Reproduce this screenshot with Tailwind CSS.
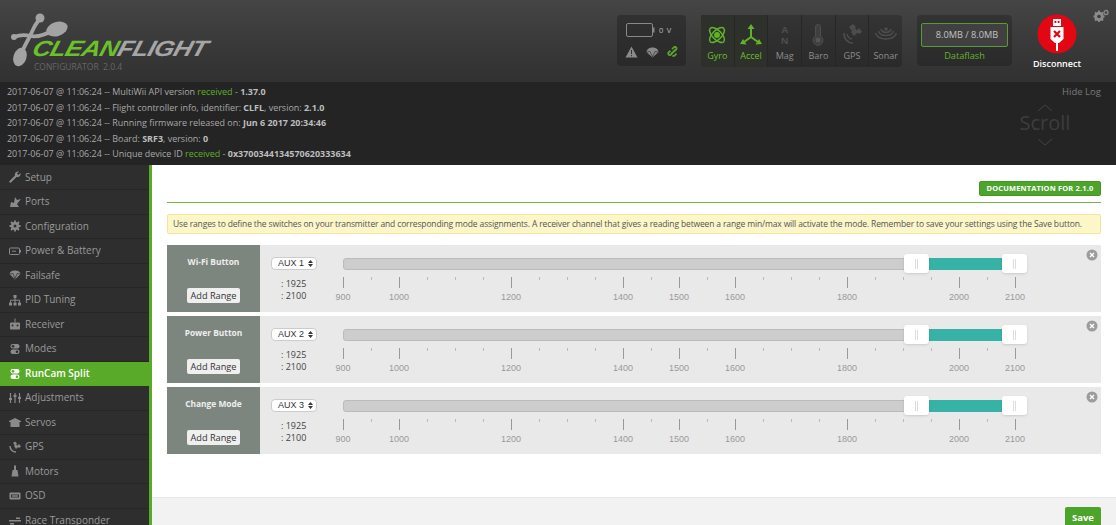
<!doctype html>
<html>
<head>
<meta charset="utf-8">
<script src="https://cdn.jsdelivr.net/npm/@tailwindcss/browser@4"></script>
</head>
<body class="w-[1116px] h-[525px] overflow-hidden bg-white font-['Open_Sans',sans-serif]">
<div class="flex flex-col h-[525px] overflow-hidden">

  <!-- header -->
  <header class="h-[82px] shrink-0 flex bg-linear-to-b from-[#454545] via-[#3a3a3a] to-[#313131] relative">
    <div class="w-[240px] relative shrink-0">
      <svg class="absolute left-[10px] top-[12px]" width="60" height="58" viewBox="0 0 60 58" fill="#a3a3a3">
        <ellipse cx="47" cy="17" rx="11" ry="7" transform="rotate(-18 47 17)"/>
        <ellipse cx="10" cy="45" rx="6.500" ry="9.500" transform="rotate(18 10 45)"/>
        <circle cx="30" cy="6" r="4.500"/>
        <circle cx="4" cy="25" r="3"/>
        <path d="M30 6 Q24 14 20 24 Q15 33 10 44 M4 25 Q12 22 20 24 Q30 26 46 17" stroke="#a3a3a3" stroke-width="3.800" fill="none" stroke-linecap="round"/>
      </svg>
      <div class="absolute left-[33px] top-[37px] h-[24px] whitespace-nowrap origin-left scale-x-[1.17] -skew-x-[14deg] font-['Liberation_Sans',sans-serif] font-bold italic text-[22px] leading-[24px] tracking-[-0.6px]"><span class="text-[#6cc12b]">CLEAN</span><span class="text-[#a6a6a6]">FLIGHT</span></div>
      <div class="absolute left-[34px] top-[61px] text-[8.5px] leading-[12px] text-[#666] whitespace-nowrap">CONFIGURATOR&nbsp; 2.0.4</div>
    </div>

    <div class="ml-auto flex items-start pt-[15px] gap-[15px]">
      <!-- battery -->
      <div class="w-[69px] h-[51px] rounded-[4px] bg-linear-to-b from-[#313131] to-[#292929] flex flex-col">
        <div class="h-[27px] flex items-center pl-[9px] pt-[3px] gap-[4px]">
          <svg width="29" height="14" viewBox="0 0 29 14"><rect x=".5" y=".5" width="26" height="13" rx="1.500" fill="none" stroke="#888"/><rect x="27" y="4.500" width="1.500" height="5" fill="#888"/></svg>
          <span class="text-[7.5px] leading-[10px] text-[#bbb] tracking-[0.8px]">0 V</span>
        </div>
        <div class="flex items-center pl-[8px] gap-[8px] pt-[4px]">
          <svg width="13" height="12" viewBox="0 0 13 12"><path d="M6.500 .5 L12.500 11.500 H.5Z" fill="#8a8a8a"/><rect x="6" y="4" width="1" height="4" fill="#333"/><rect x="6" y="9" width="1" height="1.200" fill="#333"/></svg>
          <svg width="13" height="11" viewBox="0 0 13 11"><path d="M.5 5 C1 1.500 4 .5 6.500 .5 S12 1.500 12.500 5 L6.500 10.500Z" fill="#8a8a8a"/><path d="M.5 5 L4 4.500 L6.500 10 L9 4.500 L12.500 5" stroke="#333" stroke-width=".7" fill="none"/></svg>
          <svg width="13" height="12" viewBox="0 0 13 12" fill="none" stroke="#5ea52d" stroke-width="1.700"><path d="M5.500 7 L3.500 9 A1.700 1.700 0 0 1 1.300 6.800 L3.500 4.700"/><path d="M7.500 5 L9.500 3 A1.700 1.700 0 0 0 7.300 .9 L5 3.200"/><path d="M4 8 L9 3.500"/><path d="M9.500 7.500 L8 9.200 A1.700 1.700 0 0 1 5.500 9.500"/></svg>
        </div>
      </div>

      <!-- sensors -->
      <div class="w-[201px] h-[52px] rounded-[4px] bg-linear-to-b from-[#343434] to-[#2a2a2a] flex divide-x divide-[#262626] text-[9px] leading-[12px] text-[#8c8c8c]">
        <div class="flex-1 flex flex-col items-center pt-[9px] text-[#6cbf2c] bg-[#2e302c]">
          <svg class="h-[22px]" width="20" height="22" viewBox="0 0 20 22" fill="none" stroke="#63b329" stroke-width="1.500"><ellipse cx="10" cy="11" rx="9.500" ry="4.500" transform="rotate(45 10 11)"/><ellipse cx="10" cy="11" rx="9.500" ry="4.500" transform="rotate(-45 10 11)"/><circle cx="10" cy="11" r="2.200" fill="#63b329"/></svg>
          <span class="mt-[4px]">Gyro</span>
        </div>
        <div class="flex-1 flex flex-col items-center pt-[9px] text-[#6cbf2c] bg-[#2e302c]">
          <svg class="h-[22px]" width="22" height="22" viewBox="0 0 22 22" fill="#63b329"><path d="M11 13 V4" stroke="#63b329" stroke-width="2"/><path d="M11 0 L14.500 5 H7.500Z"/><path d="M11 13 L4 18" stroke="#63b329" stroke-width="2"/><path d="M0 20 L6.500 20.500 L3 15Z"/><path d="M11 13 L18 18" stroke="#63b329" stroke-width="2"/><path d="M22 20 L15.500 20.500 L19 15Z"/></svg>
          <span class="mt-[4px]">Accel</span>
        </div>
        <div class="flex-1 flex flex-col items-center pt-[9px]">
          <div class="h-[22px] flex flex-col items-center text-[9.5px] leading-[11px] font-bold text-[#4d4d4d]"><span>A</span><span>N</span></div>
          <span class="mt-[4px]">Mag</span>
        </div>
        <div class="flex-1 flex flex-col items-center pt-[9px]">
          <svg class="h-[22px]" width="12" height="22" viewBox="0 0 12 22"><path d="M3.500 3 A2.500 2.500 0 0 1 8.500 3 V12 A5 5 0 1 1 3.500 12Z" fill="#3f3f3f" stroke="#4d4d4d"/><circle cx="6" cy="16" r="2.500" fill="#555"/></svg>
          <span class="mt-[4px]">Baro</span>
        </div>
        <div class="flex-1 flex flex-col items-center pt-[9px]">
          <svg class="h-[22px]" width="20" height="22" viewBox="0 0 20 22" fill="#4d4d4d"><path d="M7 3 L11 0 L14 3 L10 7Z"/><path d="M14 7 L17 10 L20 8 L17 4Z"/><path d="M9 8 L13 4 L16 8 L12 12Z"/><path d="M2 9 A9 9 0 0 0 11 19" fill="none" stroke="#4d4d4d" stroke-width="1.500"/><path d="M5 10 A6 6 0 0 0 10 15" fill="none" stroke="#4d4d4d" stroke-width="1.500"/></svg>
          <span class="mt-[4px]">GPS</span>
        </div>
        <div class="flex-1 flex flex-col items-center pt-[9px]">
          <svg class="h-[22px]" width="22" height="22" viewBox="0 0 22 22" fill="none" stroke="#4d4d4d" stroke-width="1.500"><circle cx="11" cy="5" r="1.800" fill="#4d4d4d" stroke="none"/><path d="M6 5 C7 9.500 15 9.500 16 5"/><path d="M3.500 7 C5 13 17 13 18.500 7"/><path d="M.5 9 C3 17 19 17 21.500 9"/></svg>
          <span class="mt-[4px]">Sonar</span>
        </div>
      </div>

      <!-- dataflash -->
      <div class="w-[95px] h-[51px] rounded-[4px] bg-linear-to-b from-[#333] to-[#2a2a2a] flex flex-col items-center pt-[8px] mr-[-15px]">
        <div class="w-[87px] h-[24px] border border-[#5b9a34] rounded-[2px] bg-[#404040] flex items-center justify-center pl-[5px] text-[9.2px] text-[#c4c4c4]">8.0MB / 8.0MB</div>
        <div class="mt-[1px] text-[9.2px] leading-[15px] text-[#63b329]">Dataflash</div>
      </div>

      <!-- disconnect -->
      <div class="w-[90px] mr-[14px] flex flex-col items-center relative top-[-1px]">
        <svg width="40" height="40" viewBox="0 0 40 40"><circle cx="20" cy="20" r="19.500" fill="#e30613"/><rect x="16" y="5" width="8" height="7" fill="#fff"/><rect x="17.500" y="7" width="1.800" height="2" fill="#e30613"/><rect x="20.700" y="7" width="1.800" height="2" fill="#e30613"/><path d="M13.500 13 H26.500 V25 L22 29 H18 L13.500 25Z" fill="#fff"/><rect x="19" y="29" width="2" height="8" fill="#fff"/><path d="M17 17 L23 23 M23 17 L17 23" stroke="#e30613" stroke-width="2.200"/></svg>
        <div class="text-[9px] leading-[12px] mt-[4px] font-semibold text-white">Disconnect</div>
      </div>
    </div>

    <svg class="absolute left-[1093px] top-[9px]" width="16" height="13" viewBox="0 0 16 13" fill="#8a8a8a"><circle cx="6" cy="7.500" r="3.500" fill="none" stroke="#8a8a8a" stroke-width="2.500"/><g stroke="#8a8a8a" stroke-width="1.800"><path d="M6 1.500 V13 M.5 7.500 H11.500 M2 3.500 L10 11.500 M10 3.500 L2 11.500"/></g><circle cx="6" cy="7.500" r="1.800" fill="#3c3c3c"/><circle cx="13" cy="3.500" r="2" fill="none" stroke="#8a8a8a" stroke-width="1.300"/></svg>
  </header>

  <!-- log -->
  <section class="h-[83px] shrink-0 bg-[#242424] relative pl-[7px] pt-[2px] text-[8.96px] leading-[15.6px] text-[#a8a8a8] whitespace-nowrap">
    <div>2017-06-07 @ 11:06:24 -- MultiWii API version <span class="text-[#5fae2b]">received</span> - <b class="text-[#bdbdbd]">1.37.0</b></div>
    <div>2017-06-07 @ 11:06:24 -- Flight controller info, identifier: <b class="text-[#bdbdbd]">CLFL</b>, version: <b class="text-[#bdbdbd]">2.1.0</b></div>
    <div>2017-06-07 @ 11:06:24 -- Running firmware released on: <b class="text-[#bdbdbd]">Jun 6 2017 20:34:46</b></div>
    <div>2017-06-07 @ 11:06:24 -- Board: <b class="text-[#bdbdbd]">SRF3</b>, version: <b class="text-[#bdbdbd]">0</b></div>
    <div>2017-06-07 @ 11:06:24 -- Unique device ID <span class="text-[#5fae2b]">received</span> - <b class="text-[#bdbdbd]">0x370034413457062​0333634</b></div>
    <div class="absolute left-[1062px] top-[3px] text-[9.5px] leading-[13px] text-[#7a7a7a]">Hide Log</div>
    <div class="absolute left-[1005px] top-[22px] w-[80px] flex flex-col items-center text-[#3d3d3d]">
      <svg width="16" height="8" viewBox="0 0 16 8" fill="none" stroke="#444"><path d="M1 7 L8 1 L15 7"/></svg>
      <div class="text-[20px] leading-[22px] mb-[4px]">Scroll</div>
      <svg width="16" height="8" viewBox="0 0 16 8" fill="none" stroke="#444"><path d="M1 1 L8 7 L15 1"/></svg>
    </div>
  </section>

  <div class="flex-1 flex min-h-0">
    <!-- sidebar -->
    <nav class="w-[152px] shrink-0 bg-[#2e2e2e] border-r-[3px] border-[#59aa29] pt-[0.5px] text-[10px] text-[#9a9a9a] overflow-hidden">
      <div class="h-[24.5px] flex items-center gap-[4px] pl-[9px] border-b border-[#262626]"><svg class="w-[12px] h-[12px]" viewBox="0 0 12 12" fill="#8a8a8a"><path d="M0 10.500 L6 4.500 A3.300 3.300 0 0 1 10 .5 L8 2.500 L9.500 4 L11.500 2 A3.300 3.300 0 0 1 7.500 6 L1.500 12Z"/></svg>Setup</div>
      <div class="h-[24.5px] flex items-center gap-[4px] pl-[9px] border-b border-[#262626]"><svg class="w-[12px] h-[12px]" viewBox="0 0 12 12" fill="#8a8a8a"><path d="M1 11 L2 6 L5 7 L6 1 L8 4 L12 3 L8 8 L10 11Z"/></svg>Ports</div>
      <div class="h-[24.5px] flex items-center gap-[4px] pl-[9px] border-b border-[#262626]"><svg class="w-[12px] h-[12px]" viewBox="0 0 12 12" fill="#8a8a8a"><path d="M6 2 A4 4 0 1 0 6 10 A4 4 0 1 0 6 2Z M6 4.500 A1.500 1.500 0 1 1 6 7.500 A1.500 1.500 0 1 1 6 4.500Z" fill-rule="evenodd"/><path d="M6 .5 V3 M6 9 V11.500 M.5 6 H3 M9 6 H11.500 M2 2 L4 4 M8 8 L10 10 M10 2 L8 4 M4 8 L2 10" stroke="#8a8a8a" stroke-width="1.800"/></svg>Configuration</div>
      <div class="h-[24.5px] flex items-center gap-[4px] pl-[9px] border-b border-[#262626]"><svg class="w-[12px] h-[12px]" viewBox="0 0 12 12" fill="none" stroke="#8a8a8a"><rect x=".5" y="3" width="10" height="6.500" rx="1"/><path d="M11.500 5 V7.500 M3 6.200 H7"/></svg>Power &amp; Battery</div>
      <div class="h-[24.5px] flex items-center gap-[4px] pl-[9px] border-b border-[#262626]"><svg class="w-[12px] h-[12px]" viewBox="0 0 12 12" fill="#8a8a8a"><path d="M.5 5 C1 2 4 1.500 6 1.500 S11 2 11.500 5 L6 10.500Z"/><path d="M.5 5 L4 4.500 L6 10 L8 4.500 L11.500 5" stroke="#2e2e2e" stroke-width=".7" fill="none"/></svg>Failsafe</div>
      <div class="h-[24.5px] flex items-center gap-[4px] pl-[9px] border-b border-[#262626]"><svg class="w-[12px] h-[12px]" viewBox="0 0 12 12" fill="#8a8a8a"><rect x="4.500" y="1" width="3" height="3"/><rect x="0" y="8.500" width="3" height="3"/><rect x="4.500" y="8.500" width="3" height="3"/><rect x="9" y="8.500" width="3" height="3"/><path d="M6 4 V8.500 M1.500 8.500 V6.200 H10.500 V8.500" stroke="#8a8a8a" fill="none"/></svg>PID Tuning</div>
      <div class="h-[24.5px] flex items-center gap-[4px] pl-[9px] border-b border-[#262626]"><svg class="w-[12px] h-[12px]" viewBox="0 0 12 12" fill="#8a8a8a"><rect x="1" y="4.500" width="10" height="7" rx="1"/><rect x="5.500" y=".5" width="1" height="4"/><circle cx="3.500" cy="7.500" r="1" fill="#2e2e2e"/><circle cx="8.500" cy="7.500" r="1" fill="#2e2e2e"/></svg>Receiver</div>
      <div class="h-[24.5px] flex items-center gap-[4px] pl-[9px] border-b border-[#262626]"><svg class="w-[12px] h-[12px]" viewBox="0 0 12 12" fill="#8a8a8a"><rect x="1.500" y="1" width="9" height="4.500" rx="2.200"/><rect x="1.500" y="6.500" width="9" height="4.500" rx="2.200"/><circle cx="4" cy="3.200" r="1.300" fill="#2e2e2e"/><circle cx="8" cy="8.700" r="1.300" fill="#2e2e2e"/></svg>Modes</div>
      <div class="h-[24.5px] flex items-center gap-[4px] pl-[9px] bg-[#59aa29] text-white font-semibold"><svg class="w-[12px] h-[12px]" viewBox="0 0 12 12" fill="#fff"><rect x="1.500" y="1" width="9" height="4.500" rx="2.200"/><rect x="1.500" y="6.500" width="9" height="4.500" rx="2.200"/><circle cx="4" cy="3.200" r="1.300" fill="#59aa29"/><circle cx="8" cy="8.700" r="1.300" fill="#59aa29"/></svg>RunCam Split</div>
      <div class="h-[24.5px] flex items-center gap-[4px] pl-[9px] border-b border-[#262626]"><svg class="w-[12px] h-[12px]" viewBox="0 0 12 12" fill="#8a8a8a"><path d="M1.500 1 V11 M6 1 V11 M10.500 1 V11" stroke="#8a8a8a" stroke-width="1.200"/><rect x="0" y="6" width="3" height="2"/><rect x="4.500" y="3" width="3" height="2"/><rect x="9" y="5" width="3" height="2"/></svg>Adjustments</div>
      <div class="h-[24.5px] flex items-center gap-[4px] pl-[9px] border-b border-[#262626]"><svg class="w-[12px] h-[12px]" viewBox="0 0 12 12" fill="#8a8a8a"><path d="M0 5 L6 2 L12 5 V6 H10.500 V11 H1.500 V6 H0Z"/></svg>Servos</div>
      <div class="h-[24.5px] flex items-center gap-[4px] pl-[9px] border-b border-[#262626]"><svg class="w-[12px] h-[12px]" viewBox="0 0 12 12" fill="#8a8a8a"><path d="M4 2 L6 .5 L8 2.500 L6 4.500Z M8 5 L10 3 L12 5.500 L10 7Z M5 5 L7 3 L9 6 L7 8Z"/><path d="M1 5 A6 6 0 0 0 7 11" fill="none" stroke="#8a8a8a" stroke-width="1.500"/></svg>GPS</div>
      <div class="h-[24.5px] flex items-center gap-[4px] pl-[9px] border-b border-[#262626]"><svg class="w-[12px] h-[12px]" viewBox="0 0 12 12" fill="#8a8a8a"><rect x="5" y=".5" width="2" height="5"/><path d="M3.500 5 H8.500 L9.500 11.500 H2.500Z"/></svg>Motors</div>
      <div class="h-[24.5px] flex items-center gap-[4px] pl-[9px] border-b border-[#262626]"><svg class="w-[12px] h-[12px]" viewBox="0 0 12 12" fill="#8a8a8a"><rect x=".5" y="2.500" width="11" height="7" rx="1"/><rect x="2" y="4.500" width="8" height="3" fill="#2e2e2e"/><rect x="3" y="5.300" width="6" height="1.400"/></svg>OSD</div>
      <div class="h-[24.5px] flex items-center gap-[4px] pl-[9px] border-b border-[#262626]"><svg class="w-[12px] h-[12px]" viewBox="0 0 12 12" fill="#8a8a8a"><rect x="0" y="6" width="12" height="1.500"/><rect x="1" y="9" width="4" height="1.500"/><rect x="7" y="3.500" width="4" height="1.500"/></svg>Race Transponder</div>
    </nav>

    <!-- content -->
    <main class="flex-1 flex flex-col min-w-0">
      <div class="flex-1 px-[15px] pt-[16px] min-h-0">
        <div class="flex justify-end pb-[6px] border-b border-[#74b54b]">
          <div class="w-[122px] h-[15px] rounded-[2px] bg-[#4da42b] border border-[#46962a] flex items-center justify-center text-[7.4px] font-bold text-white tracking-[0.2px]">DOCUMENTATION FOR 2.1.0</div>
        </div>
        <div class="mt-[11px] h-[20px] bg-[#fdf6c9] border border-[#f5e49a] rounded-[2px] flex items-center pl-[5px] text-[8.5px] tracking-[-0.14px] text-[#555] whitespace-nowrap">Use ranges to define the switches on your transmitter and corresponding mode assignments. A receiver channel that gives a reading between a range min/max will activate the mode. Remember to save your settings using the Save button.</div>

        <div class="mt-[11px] flex flex-col gap-[4px]">
          <div class="h-[67px] flex bg-[#e9e9e9]">
            <div class="w-[93px] bg-[#7d857f] flex flex-col items-center pt-[10px]">
              <div class="text-[8.4px] leading-[14px] font-bold text-[#eee]">Wi-Fi Button</div>
              <div class="mt-[19px] w-[53px] h-[15px] rounded-[2px] bg-[#efefef] flex items-center justify-center text-[9.2px] text-[#333]">Add Range</div>
            </div>
            <div class="flex-1 flex relative">
              <div class="w-[83px] pl-[11px] pt-[12px]">
                <div class="w-[46px] h-[13px] bg-white border border-[#ccc] rounded-[4px] flex items-center justify-between pl-[6px] pr-[3px] font-['Liberation_Sans',sans-serif] text-[9px] text-[#333]"><span>AUX 1</span><svg width="5" height="7" viewBox="0 0 5 7" fill="#333"><path d="M2.500 0 L5 3 H0Z M2.500 7 L5 4 H0Z"/></svg></div>
                <div class="pl-[10px] mt-[8px] text-[9px] leading-[12px] text-[#444]"><div>: 1925</div><div>: 2100</div></div>
              </div>
              <div class="w-[684px] relative scale-area">
                <div class="absolute left-0 right-0 top-[13px] h-[12px] bg-[#cdcdcd] border border-[#bbb] rounded-[3px]"></div>
                <div class="absolute left-[586px] top-[13px] w-[73px] h-[12px] bg-[#36b3a6]"></div>
                <div class="absolute left-[561px] top-[9px] w-[25px] h-[19px] bg-white rounded-[3px] shadow flex items-center justify-center gap-[1px]"><i class="w-px h-[10px] bg-[#ddd]"></i><i class="w-px h-[10px] bg-[#ddd]"></i></div>
                <div class="absolute left-[659px] top-[9px] w-[25px] h-[19px] bg-white rounded-[3px] shadow flex items-center justify-center gap-[1px]"><i class="w-px h-[10px] bg-[#ddd]"></i><i class="w-px h-[10px] bg-[#ddd]"></i></div>
              </div>
              <svg class="absolute left-[826px] top-[4px]" width="12" height="12" viewBox="0 0 12 12"><circle cx="6" cy="6" r="5.500" fill="#9c9c9c"/><path d="M4 4 L8 8 M8 4 L4 8" stroke="#fff" stroke-width="1.300"/></svg>
            </div>
          </div>

          <div class="h-[67px] flex bg-[#e9e9e9]">
            <div class="w-[93px] bg-[#7d857f] flex flex-col items-center pt-[10px]">
              <div class="text-[8.4px] leading-[14px] font-bold text-[#eee]">Power Button</div>
              <div class="mt-[19px] w-[53px] h-[15px] rounded-[2px] bg-[#efefef] flex items-center justify-center text-[9.2px] text-[#333]">Add Range</div>
            </div>
            <div class="flex-1 flex relative">
              <div class="w-[83px] pl-[11px] pt-[12px]">
                <div class="w-[46px] h-[13px] bg-white border border-[#ccc] rounded-[4px] flex items-center justify-between pl-[6px] pr-[3px] font-['Liberation_Sans',sans-serif] text-[9px] text-[#333]"><span>AUX 2</span><svg width="5" height="7" viewBox="0 0 5 7" fill="#333"><path d="M2.500 0 L5 3 H0Z M2.500 7 L5 4 H0Z"/></svg></div>
                <div class="pl-[10px] mt-[8px] text-[9px] leading-[12px] text-[#444]"><div>: 1925</div><div>: 2100</div></div>
              </div>
              <div class="w-[684px] relative scale-area">
                <div class="absolute left-0 right-0 top-[13px] h-[12px] bg-[#cdcdcd] border border-[#bbb] rounded-[3px]"></div>
                <div class="absolute left-[586px] top-[13px] w-[73px] h-[12px] bg-[#36b3a6]"></div>
                <div class="absolute left-[561px] top-[9px] w-[25px] h-[19px] bg-white rounded-[3px] shadow flex items-center justify-center gap-[1px]"><i class="w-px h-[10px] bg-[#ddd]"></i><i class="w-px h-[10px] bg-[#ddd]"></i></div>
                <div class="absolute left-[659px] top-[9px] w-[25px] h-[19px] bg-white rounded-[3px] shadow flex items-center justify-center gap-[1px]"><i class="w-px h-[10px] bg-[#ddd]"></i><i class="w-px h-[10px] bg-[#ddd]"></i></div>
              </div>
              <svg class="absolute left-[826px] top-[4px]" width="12" height="12" viewBox="0 0 12 12"><circle cx="6" cy="6" r="5.500" fill="#9c9c9c"/><path d="M4 4 L8 8 M8 4 L4 8" stroke="#fff" stroke-width="1.300"/></svg>
            </div>
          </div>

          <div class="h-[67px] flex bg-[#e9e9e9]">
            <div class="w-[93px] bg-[#7d857f] flex flex-col items-center pt-[10px]">
              <div class="text-[8.4px] leading-[14px] font-bold text-[#eee]">Change Mode</div>
              <div class="mt-[19px] w-[53px] h-[15px] rounded-[2px] bg-[#efefef] flex items-center justify-center text-[9.2px] text-[#333]">Add Range</div>
            </div>
            <div class="flex-1 flex relative">
              <div class="w-[83px] pl-[11px] pt-[12px]">
                <div class="w-[46px] h-[13px] bg-white border border-[#ccc] rounded-[4px] flex items-center justify-between pl-[6px] pr-[3px] font-['Liberation_Sans',sans-serif] text-[9px] text-[#333]"><span>AUX 3</span><svg width="5" height="7" viewBox="0 0 5 7" fill="#333"><path d="M2.500 0 L5 3 H0Z M2.500 7 L5 4 H0Z"/></svg></div>
                <div class="pl-[10px] mt-[8px] text-[9px] leading-[12px] text-[#444]"><div>: 1925</div><div>: 2100</div></div>
              </div>
              <div class="w-[684px] relative scale-area">
                <div class="absolute left-0 right-0 top-[13px] h-[12px] bg-[#cdcdcd] border border-[#bbb] rounded-[3px]"></div>
                <div class="absolute left-[586px] top-[13px] w-[73px] h-[12px] bg-[#36b3a6]"></div>
                <div class="absolute left-[561px] top-[9px] w-[25px] h-[19px] bg-white rounded-[3px] shadow flex items-center justify-center gap-[1px]"><i class="w-px h-[10px] bg-[#ddd]"></i><i class="w-px h-[10px] bg-[#ddd]"></i></div>
                <div class="absolute left-[659px] top-[9px] w-[25px] h-[19px] bg-white rounded-[3px] shadow flex items-center justify-center gap-[1px]"><i class="w-px h-[10px] bg-[#ddd]"></i><i class="w-px h-[10px] bg-[#ddd]"></i></div>
              </div>
              <svg class="absolute left-[826px] top-[4px]" width="12" height="12" viewBox="0 0 12 12"><circle cx="6" cy="6" r="5.500" fill="#9c9c9c"/><path d="M4 4 L8 8 M8 4 L4 8" stroke="#fff" stroke-width="1.300"/></svg>
            </div>
          </div>
        </div>
      </div>
      <div class="h-[28px] shrink-0 bg-[#f2f2f2] border-t border-[#e6e6e6] flex justify-end pr-[15px] pt-[9px]">
        <div class="w-[36px] h-[24px] rounded-[2px] bg-[#4da42b] flex items-start justify-center pt-[4px] text-[9.5px] font-bold text-white">Save</div>
      </div>
    </main>
  </div>
</div>
<script>
  var labelled = [900,1000,1200,1400,1500,1600,1800,2000,2100];
  document.querySelectorAll('.scale-area').forEach(function (area) {
    for (var v = 900; v <= 2100; v += 50) {
      var x = (v - 900) * 0.56;
      var major = labelled.indexOf(v) >= 0;
      var t = document.createElement('div');
      t.className = major ? 'absolute top-[32px] w-px h-[11px] bg-[#999]' : 'absolute top-[32px] w-px h-[3px] bg-[#bbb]';
      t.style.left = x + 'px';
      area.appendChild(t);
      if (major) {
        var l = document.createElement('div');
        l.className = "absolute top-[46px] w-[40px] -ml-[20px] text-center text-[9px] leading-[12px] text-[#999] font-['Liberation_Sans',sans-serif]";
        l.style.left = x + 'px';
        l.textContent = v;
        area.appendChild(l);
      }
    }
  });
</script>
</body>
</html>
